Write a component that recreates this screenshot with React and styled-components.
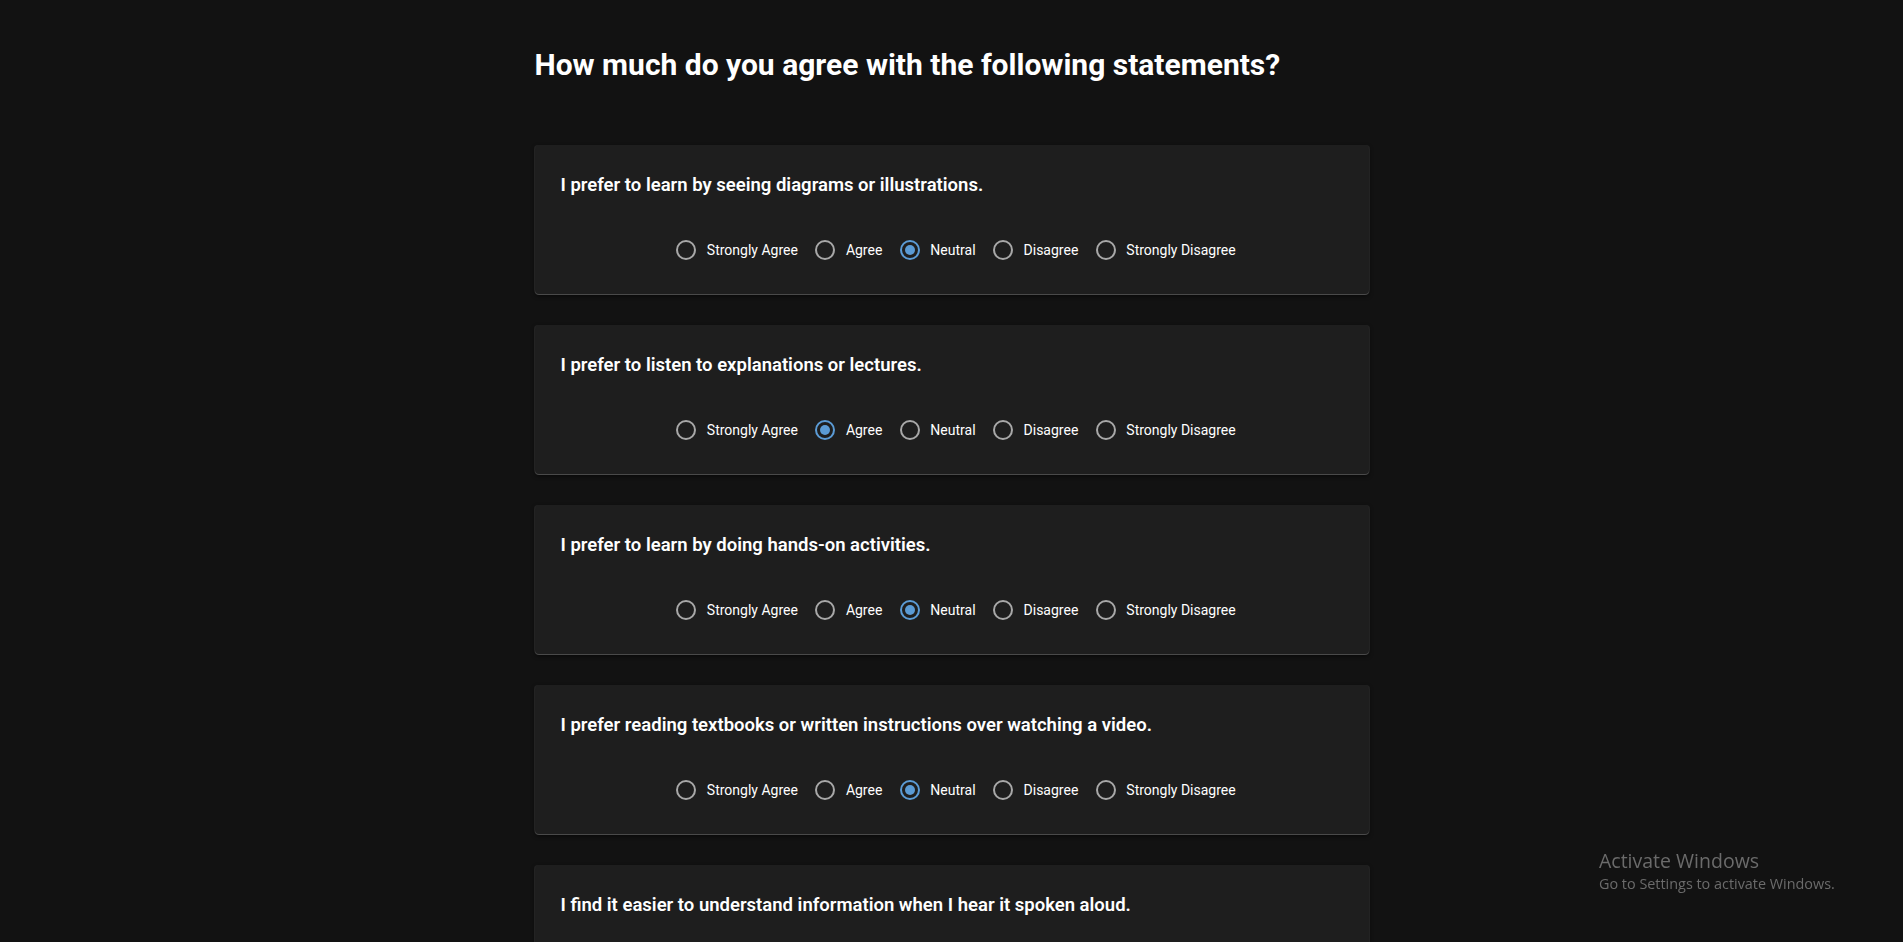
import React, { useState } from "react";
import styled, { createGlobalStyle } from "styled-components";

const Global = createGlobalStyle`
  html, body { margin: 0; padding: 0; background: #121212; }
  body { font-family: Roboto, "Noto Sans", Arial, sans-serif; color: #fff; }
  * { box-sizing: border-box; }
`;

const Page = styled.main`
  width: 834px;
  margin: 0 auto;
  padding: 47px 0 40px;
`;

const Title = styled.h1`
  margin: 0 0 63px;
  font-size: 30px;
  line-height: 35px;
  font-weight: 700;
  color: #fff;
`;

const List = styled.div`
  display: flex;
  flex-direction: column;
  gap: 31px;
`;

const Card = styled.section`
  background: #1e1e1e;
  border-radius: 4px;
  padding: 28px 26px 23px;
  box-shadow: 0 1px 0 0 #4a4a4a, -1px 0 0 0 #232323, 1px 0 0 0 #232323,
    0 2px 4px rgba(0, 0, 0, 0.6);
`;

const Question = styled.p`
  margin: 0;
  font-size: 18.5px;
  line-height: 25px;
  font-weight: 600;
  color: #fff;
`;

const Options = styled.div`
  display: flex;
  justify-content: center;
  align-items: center;
  gap: 17.5px;
  margin: 31px 0 0 9px;
  height: 42px;
`;

const Option = styled.label`
  display: flex;
  align-items: center;
  gap: 10.5px;
  cursor: pointer;
  font-size: 14px;
  line-height: 20px;
  color: #fff;
`;

const Hidden = styled.input`
  position: absolute;
  opacity: 0;
  width: 0;
  height: 0;
  margin: 0;
`;

const Circle = styled.span`
  width: 20px;
  height: 20px;
  border-radius: 50%;
  border: 2px solid ${(p) => (p.$on ? "#5b9bd5" : "#a8a8a8")};
  display: flex;
  align-items: center;
  justify-content: center;
  flex: none;
  &::after {
    content: "";
    width: 10px;
    height: 10px;
    border-radius: 50%;
    background: #5b9bd5;
    transform: scale(${(p) => (p.$on ? 1 : 0)});
  }
`;

const Watermark = styled.div`
  position: fixed;
  left: 1599px;
  top: 848px;
  font-family: "Segoe UI", "Open Sans", "Noto Sans", sans-serif;
  color: #6b6b6b;
  pointer-events: none;
`;

const WmTitle = styled.div`
  font-size: 19.5px;
  line-height: 26px;
`;

const WmSub = styled.div`
  font-size: 14.4px;
  line-height: 20px;
`;

const OPTIONS = ["Strongly Agree", "Agree", "Neutral", "Disagree", "Strongly Disagree"];

const QUESTIONS = [
  { text: "I prefer to learn by seeing diagrams or illustrations.", value: "Neutral" },
  { text: "I prefer to listen to explanations or lectures.", value: "Agree" },
  { text: "I prefer to learn by doing hands-on activities.", value: "Neutral" },
  { text: "I prefer reading textbooks or written instructions over watching a video.", value: "Neutral" },
  { text: "I find it easier to understand information when I hear it spoken aloud.", value: "Neutral" },
];

export default function App() {
  const [answers, setAnswers] = useState(QUESTIONS.map((q) => q.value));
  const set = (i, v) => setAnswers((a) => a.map((x, j) => (j === i ? v : x)));
  return (
    <>
      <Global />
      <Page>
        <Title>How much do you agree with the following statements?</Title>
        <List>
          {QUESTIONS.map((q, i) => (
            <Card key={i}>
              <Question>{q.text}</Question>
              <Options role="radiogroup">
                {OPTIONS.map((o) => (
                  <Option key={o}>
                    <Hidden
                      type="radio"
                      name={`q${i}`}
                      checked={answers[i] === o}
                      onChange={() => set(i, o)}
                    />
                    <Circle $on={answers[i] === o} />
                    {o}
                  </Option>
                ))}
              </Options>
            </Card>
          ))}
        </List>
      </Page>
      <Watermark>
        <WmTitle>Activate Windows</WmTitle>
        <WmSub>Go to Settings to activate Windows.</WmSub>
      </Watermark>
    </>
  );
}
